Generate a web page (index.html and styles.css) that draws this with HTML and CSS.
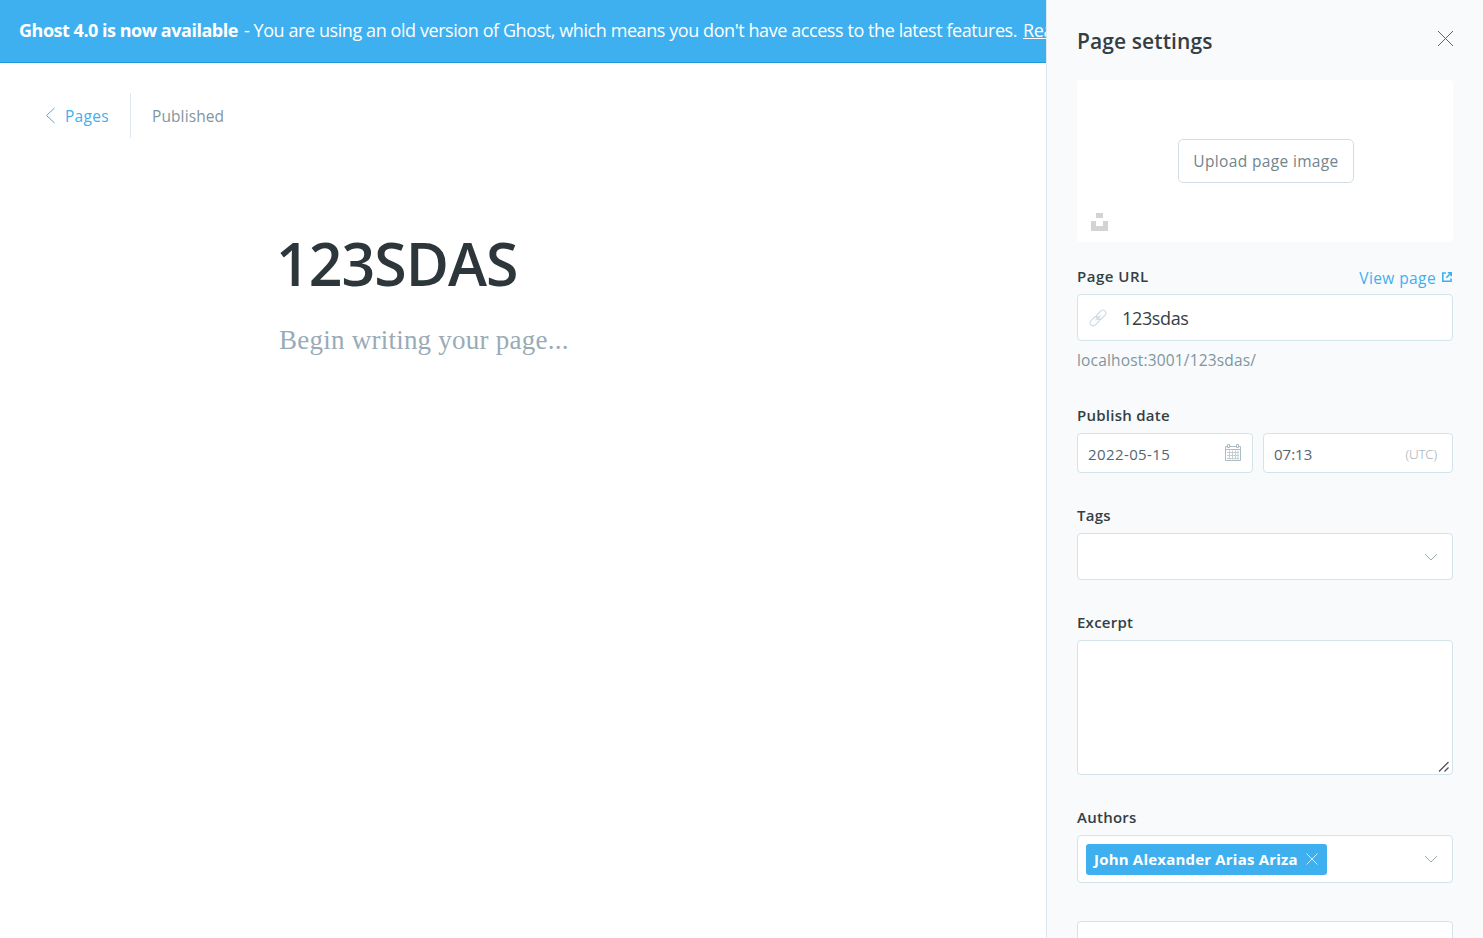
FILE: index.html
```html
<!DOCTYPE html>
<html lang="en">
<head>
<meta charset="utf-8">
<title>Page settings</title>
<link rel="stylesheet" href="styles.css">
</head>
<body>
<div class="app">
  <main class="editor">
    <div class="banner"><strong class="banner-lead">Ghost 4.0 is now available</strong><span class="banner-text">- You are using an old version of Ghost, which means you don't have access to the latest features.</span><a class="banner-link">Read</a></div>
    <header class="toolbar">
      <a class="back"><svg class="back-icon" width="11" height="17" viewBox="0 0 11 17"><path d="M9.500 1 1.500 8.500l8 7.500"/></svg><span class="back-text">Pages</span></a>
      <span class="status">Published</span>
    </header>
    <article class="document">
      <h1 class="doc-title"><span class="doc-title-text">123SDAS</span></h1>
      <p class="doc-body"><span class="doc-body-text">Begin writing your page...</span></p>
    </article>
  </main>
  <aside class="settings">
    <div class="settings-head">
      <h2 class="settings-title">Page settings</h2>
      <svg class="close" width="17" height="17" viewBox="0 0 17 17"><path d="M1 1l15 15M16 1 1 16"/></svg>
    </div>
    <div class="uploader">
      <button class="upload-button"><span class="upload-text">Upload page image</span></button>
      <svg class="unsplash" width="17" height="18" viewBox="0 0 17 18"><path d="M5 0h7v5H5zM0 8h5v5h7V8h5v10H0z"/></svg>
    </div>
    <section class="field url-field">
      <div class="label-row"><label class="label label-url">Page URL</label>
        <a class="view"><span class="view-text">View page</span><svg class="view-icon" width="10" height="10" viewBox="0 0 10 10"><path d="M4 1H.8v8.200H9V6.500M4.300 5.700 9 1M5.800.8h3.400v3.400"/></svg></a></div>
      <div class="input url-input">
        <svg class="link-icon" width="18" height="18" viewBox="0 0 18 18"><g transform="rotate(-45 9 9)"><rect x="-.8" y="6" width="10.500" height="6" rx="3"/><rect x="8.300" y="6" width="10.500" height="6" rx="3"/><path d="M5.500 9h7"/></g></svg>
        <span class="url-value">123sdas</span>
      </div>
      <div class="hint"><span class="hint-text">localhost:3001/123sdas/</span></div>
    </section>
    <section class="field">
      <label class="label label-date">Publish date</label>
      <div class="date-row">
        <div class="input date-input"><span class="date-value">2022-05-15</span>
          <svg class="calendar" width="16" height="17" viewBox="0 0 16 17"><path d="M2 2.500H.5v14h15v-14H14M4.500 2.500h7M.5 5.500h15"/><path class="grid" d="M2 8.500h12M2 11.500h12M2 14.500h12M4.500 6.500v9M7.500 6.500v9M10.500 6.500v9M13 6.500v9"/><path d="M2.500.5h2v3h-2zM11.500.5h2v3h-2z"/></svg></div>
        <div class="input time-input"><span class="time-value">07:13</span><span class="zone">(UTC)</span></div>
      </div>
    </section>
    <section class="field">
      <label class="label label-tags">Tags</label>
      <div class="input select"><svg class="chevron" width="14" height="9" viewBox="0 0 14 9"><path d="M1 1l6 6 6-6"/></svg></div>
    </section>
    <section class="field">
      <label class="label label-excerpt">Excerpt</label>
      <div class="excerpt-wrap"><textarea class="input excerpt"></textarea><svg class="grip" width="12" height="12" viewBox="0 0 12 12"><path d="M1 10.500 10.500 1M6.500 10.500l4-4"/></svg></div>
    </section>
    <section class="field authors-field">
      <label class="label label-authors">Authors</label>
      <div class="input select authors">
        <span class="token"><span class="token-text">John Alexander Arias Ariza</span><svg class="token-close" width="12" height="12" viewBox="0 0 12 12"><path d="M.5.5l11 11M11.500.5l-11 11"/></svg></span>
        <svg class="chevron" width="14" height="9" viewBox="0 0 14 9"><path d="M1 1l6 6 6-6"/></svg>
      </div>
    </section>
    <div class="input next-group"></div>
  </aside>
</div>
</body>
</html>
```
FILE: styles.css
```css
* { box-sizing: border-box; }
body { margin: 0; font-family: "Open Sans", "Noto Sans", sans-serif; color: #343f44; background: #fff; }
svg { display: block; flex: none; fill: none; }
.app { display: flex; height: 938px; overflow: hidden; white-space: nowrap; }
.editor { width: 1046px; flex: none; overflow: hidden; }
.banner { display: flex; align-items: center; gap: 6px; height: 63px; padding: 0 0 2px 19px; overflow: hidden; background: #3eb0ef; border-bottom: 1px solid #1b9ae0; color: #fff; font-size: 18px; }
.banner > * { flex: none; }
.banner-lead { font-weight: 700; letter-spacing: -.48px; }
.banner-text { letter-spacing: -.42px; }
.banner-link { text-decoration: underline; letter-spacing: -.4px; }
.toolbar { display: flex; align-items: center; height: 45px; margin: 30px 0 0 45px; padding-top: 0; font-size: 15.500px; }
.back { display: flex; align-items: center; gap: 9px; width: 86px; height: 45px; border-right: 1px solid #dfe8ef; color: #3eb0ef; }
.back-icon { stroke: #3eb0ef; }
.back-text { letter-spacing: .3px; }
.status { margin-left: 21px; color: #7f969f; letter-spacing: .1px; }
.document { padding: 91px 0 0 279px; }
.doc-title { margin: 0 0 0 -3px; height: 68px; line-height: 68px; font-size: 59px; font-weight: 600; color: #2d373b; letter-spacing: -1px; }
.doc-body { margin: 26px 0 0; height: 34px; line-height: 34px; font-family: "Liberation Serif", serif; font-size: 27px; letter-spacing: .24px; color: #98abb7; }
.settings { width: 437px; flex: none; padding: 0 30px; background: #f8fafc; border-left: 1px solid #dfe8ef; overflow: hidden; }
.settings-head { display: flex; justify-content: space-between; height: 80px; padding-top: 26px; }
.settings-title { margin: 0; height: 30px; line-height: 30px; font-size: 21px; font-weight: 600; letter-spacing: .1px; }
.close { margin-top: 4px; margin-right: -1px; stroke: #54666d; }
.uploader { position: relative; display: flex; align-items: center; justify-content: center; height: 162px; padding-left: 2px; background: #fff; border-radius: 4px; }
.upload-button { width: 176px; height: 44px; padding: 0; background: #fff; border: 1px solid #d3dee4; border-radius: 5px; font: 15.500px "Open Sans", sans-serif; letter-spacing: .35px; color: #70858d; }
.unsplash { position: absolute; left: 14px; bottom: 11px; fill: #d3d3d3; }
.field { margin-bottom: 31px; }
.url-field { margin: 23px 0 32px; }
.authors-field { margin-bottom: 38px; }
.label { display: block; height: 22px; margin-bottom: 7px; line-height: 22px; font-size: 15px; font-weight: 600; letter-spacing: .25px; }
.label-url { letter-spacing: .5px; }
.label-row { display: flex; justify-content: space-between; }
.view { display: flex; align-items: center; gap: 6px; height: 24px; padding-top: 1px; font-size: 15.500px; letter-spacing: .4px; color: #3eb0ef; }
.view-icon { stroke: #3eb0ef; stroke-width: 1.600; margin: -2px 1px 0 0; }
.input { display: flex; align-items: center; width: 376px; background: #fff; border: 1px solid #d5e3eb; border-radius: 4px; }
.url-input { height: 47px; padding-left: 11px; gap: 15px; }
.link-icon { stroke: #cbdbe4; stroke-width: 1.100; }
.url-value { font-size: 18px; letter-spacing: -.35px; }
.hint { height: 22px; margin-top: 8px; margin-bottom: 33px; line-height: 22px; font-size: 15.500px; letter-spacing: .17px; color: #7f969f; }
.date-row { display: flex; gap: 10px; }
.date-input, .time-input { justify-content: space-between; height: 40px; padding: 1px 11px 0 10px; font-size: 15px; letter-spacing: .4px; color: #54666d; }
.date-input { width: 176px; }
.time-input { width: 190px; padding-right: 15px; letter-spacing: 0; }
.calendar { stroke: #adbbc2; margin-top: -2px; }
.grid { stroke: #c2cdd2; }
.zone { font-size: 13.500px; font-weight: 300; letter-spacing: -.2px; color: #98a8af; }
.select { height: 47px; justify-content: flex-end; padding: 1px 14px 0 0; }
.chevron { stroke: #9baeb8; }
.excerpt-wrap { position: relative; }
.excerpt { display: block; height: 135px; resize: none; outline: none; }
.grip { position: absolute; right: 3px; bottom: 2px; stroke: #4d4d4d; stroke-width: 1.200; }
.authors { height: 48px; justify-content: space-between; padding: 0 14px 0 8px; }
.token { display: flex; align-items: center; justify-content: space-between; width: 241px; height: 31px; padding: 0 9px 0 8px; background: #3eb0ef; border-radius: 3px; color: #fff; font-size: 15px; font-weight: 700; letter-spacing: .2px; }
.token-close { stroke: #d5eefc; }
.next-group { height: 60px; }
```
